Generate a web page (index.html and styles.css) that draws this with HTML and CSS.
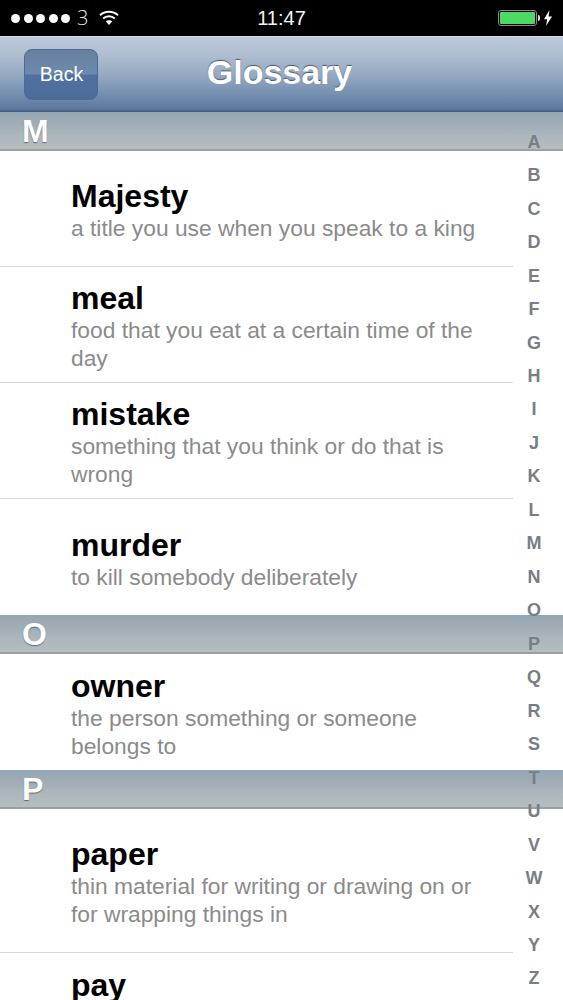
FILE: index.html
```html
<!DOCTYPE html>
<html lang="en">
<head>
<meta charset="utf-8">
<title>Glossary</title>
<link rel="stylesheet" href="styles.css">
</head>
<body>
<div class="screen">
  <header class="status">
    <div class="status-left">
      <span class="dots"><i></i><i></i><i></i><i></i><i></i></span>
      <span class="carrier">3</span>
      <svg class="wifi" viewBox="0 0 20 15" width="20" height="15"><path d="M1 5.200C6 .6 14 .6 19 5.200" fill="none" stroke="#fff" stroke-width="2"/><path d="M4.200 8.600c3.300-3 8.300-3 11.600 0" fill="none" stroke="#fff" stroke-width="2"/><path d="M10 15L6.700 11.300c2-1.500 4.600-1.500 6.600 0z" fill="#fff"/></svg>
    </div>
    <div class="time">11:47</div>
    <div class="status-right">
      <span class="battery"><span class="battery-fill"></span></span>
      <span class="nub"></span>
      <svg class="bolt" viewBox="0 0 8 16" width="8" height="16"><path d="M5.500 0L0 9.200h3.200L2 16l6-9.600H4.600z" fill="#fff"/></svg>
    </div>
  </header>
  <nav class="nav">
    <button class="back">Back</button>
    <h1 class="title">Glossary</h1>
  </nav>
  <main class="list">
    <h2 class="section">M</h2>
    <div class="row"><div class="term">Majesty</div><div class="def">a title you use when you speak to a king</div></div>
    <div class="row"><div class="term">meal</div><div class="def">food that you eat at a certain time of the day</div></div>
    <div class="row"><div class="term">mistake</div><div class="def">something that you think or do that is wrong</div></div>
    <div class="row last"><div class="term">murder</div><div class="def">to kill somebody deliberately</div></div>
    <h2 class="section">O</h2>
    <div class="row last"><div class="term">owner</div><div class="def">the person something or someone belongs to</div></div>
    <h2 class="section">P</h2>
    <div class="row tall"><div class="term">paper</div><div class="def">thin material for writing or drawing on or for wrapping things in</div></div>
    <div class="row cut"><div class="term">pay</div></div>
  </main>
  <aside class="index">
    <span>A</span><span>B</span><span>C</span><span>D</span><span>E</span><span>F</span><span>G</span><span>H</span><span>I</span><span>J</span><span>K</span><span>L</span><span>M</span><span>N</span><span>O</span><span>P</span><span>Q</span><span>R</span><span>S</span><span>T</span><span>U</span><span>V</span><span>W</span><span>X</span><span>Y</span><span>Z</span>
  </aside>
</div>
</body>
</html>
```
FILE: styles.css
```css
* { box-sizing: border-box; }
html, body { margin: 0; padding: 0; }
body { background: #fff; font-family: "Liberation Sans", Arial, sans-serif; }
.screen { position: relative; width: 563px; height: 1000px; overflow: hidden; background: #fff; }

.status { height: 36px; background: #000; color: #fff; display: flex; align-items: center; justify-content: space-between; position: relative; }
.status-left { display: flex; align-items: center; padding-left: 11px; }
.dots { display: flex; gap: 3.500px; }
.dots i { display: block; width: 9px; height: 9px; border-radius: 50%; background: #fff; }
.carrier { margin-left: 7px; width: 14px; color: #e6e6e6; font-family: "Open Sans", sans-serif; font-size: 20px; font-weight: 300; line-height: 20px; }
.wifi { margin-left: 8px; margin-top: -1px; }
.time { position: absolute; left: 0; right: 0; top: 0; line-height: 36px; text-align: center; font-size: 20px; font-weight: 400; color: #f4f4f4; }
.status-right { display: flex; align-items: center; padding-right: 11px; }
.battery { width: 39px; height: 16px; border: 1.500px solid #8a8a8a; border-radius: 3px; padding: 1px; display: block; }
.battery-fill { display: block; height: 100%; background: #4cd964; border-radius: 1px; }
.nub { width: 2px; height: 6px; background: #ddd; margin-left: 1px; border-radius: 0 2px 2px 0; }
.bolt { margin-left: 4px; }

.nav { height: 76px; position: relative; display: flex; align-items: center; justify-content: center; background: linear-gradient(#bcc9da 0%, #aebdd0 25%, #97aac2 50%, #7690b0 75%, #5d789f 96%, #3f5a80 100%); border-top: 1px solid #d5dde6; }
.back { position: absolute; left: 24px; top: 12px; width: 74px; height: 51px; padding: 0 0 0 1px; border: 1.500px solid #4e6a90; border-radius: 8px; background: linear-gradient(#66809f 0%, #6d89ae 48%, #50709f 52%, #4c6c9c 100%); color: #fff; font: 400 19.500px "Liberation Sans", Arial, sans-serif; }
.title { margin: 0 4px 5px 0; font-size: 34px; font-weight: 700; color: #fff; line-height: 40px; text-shadow: 0 -1px 1px #4a5a70; }

.section { margin: 0; height: 39px; padding-left: 22px; font-size: 32px; line-height: 37px; font-weight: 700; color: #fff; text-shadow: 0 1px 1px #5f6a70; background: linear-gradient(#96a6b3 0%, #a0adb6 30%, #adb7bc 65%, #b4bdbf 100%); border-top: 1px solid #8fa9bf; border-bottom: 2px solid #9a9fa3; }

.row { width: 513px; height: 116px; padding: 3px 20px 0 71px; display: flex; flex-direction: column; justify-content: center; border-bottom: 1px solid #d8d8d8; }
.row.last { border-bottom: 0; }
.row.tall { height: 144px; }
.row.cut { height: 47px; padding-top: 14px; justify-content: flex-start; border-bottom: 0; }
.term { font-size: 32px; line-height: 36px; font-weight: 700; color: #000; flex: none; }
.def { font-size: 22.800px; line-height: 28px; color: #8b8b8b; }

.index { position: absolute; left: 514px; top: 125px; width: 40px; display: grid; grid-auto-rows: 33.480px; justify-items: center; align-items: center; }
.index span { display: block; font-size: 18px; line-height: 20px; font-weight: 700; color: #777e86; }
```
